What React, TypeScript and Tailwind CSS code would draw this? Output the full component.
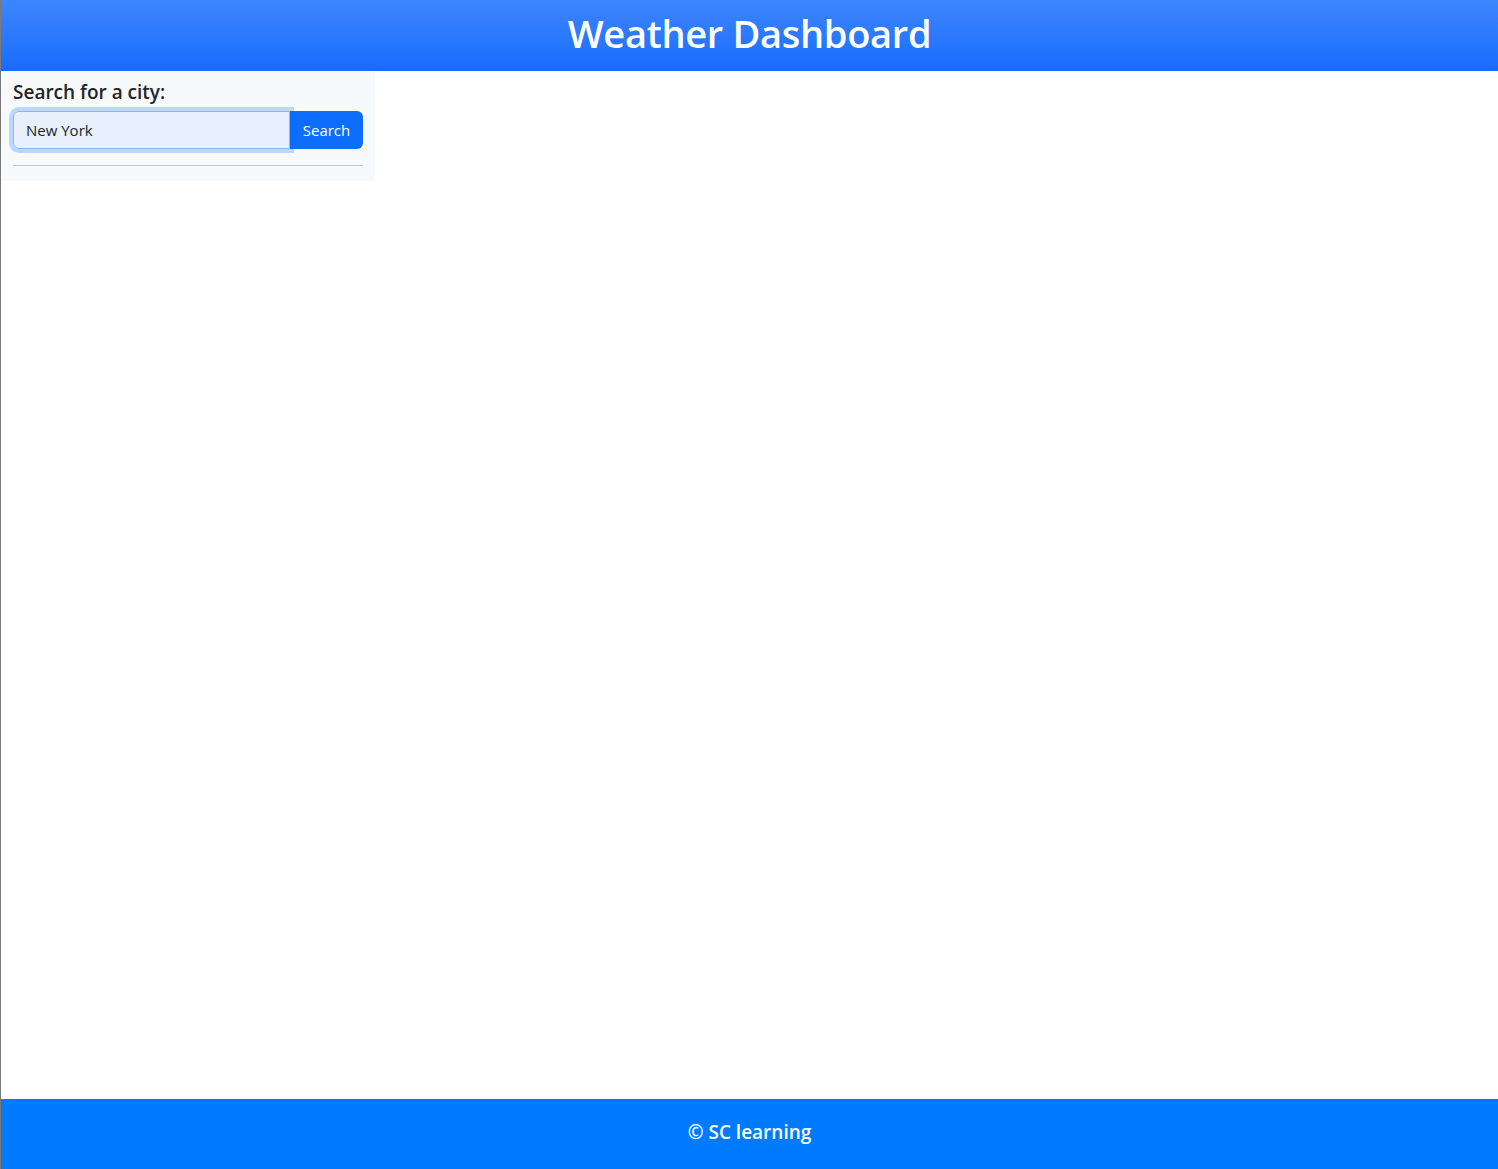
export default function App() {
  return (
    <div
      className="min-h-screen flex flex-col border-l border-[#7a7a7a] bg-white"
      style={{ fontFamily: '"Open Sans", "Noto Sans", sans-serif' }}
    >
      <header className="h-[71px] pb-[5px] flex items-center justify-center bg-gradient-to-b from-[#3e85ff] to-[#146cfd]">
        <h1 className="text-[38px] font-semibold text-white tracking-[-0.3px] leading-none">
          Weather Dashboard
        </h1>
      </header>
      <main className="flex-1 flex items-start">
        <aside className="w-[374px] bg-[#f8f9fa] px-3 pt-3 pb-[15px]">
          <label className="block text-[19px] font-semibold text-[#212529] leading-[18px] mb-[10px]">
            Search for a city:
          </label>
          <div className="flex">
            <div className="relative flex-1 rounded-l-[6px] shadow-[0_0_0_4px_rgba(13,110,253,0.25)]">
              <input
                type="text"
                defaultValue="New York"
                className="w-full h-[38px] px-3 text-[15px] text-[#212529] bg-[#e8f0fe] border border-[#86b7fe] rounded-l-[6px] outline-none"
              />
            </div>
            <button className="relative z-10 w-[73px] h-[38px] bg-[#0d6efd] text-white text-[15px] rounded-r-[6px]">
              Search
            </button>
          </div>
          <hr className="mt-4 border-t border-[#c4c6c8]" />
        </aside>
      </main>
      <footer className="h-[70px] pb-1 flex items-center justify-center bg-[#007bff]">
        <p className="text-[19px] font-semibold text-white">© SC learning</p>
      </footer>
    </div>
  );
}
